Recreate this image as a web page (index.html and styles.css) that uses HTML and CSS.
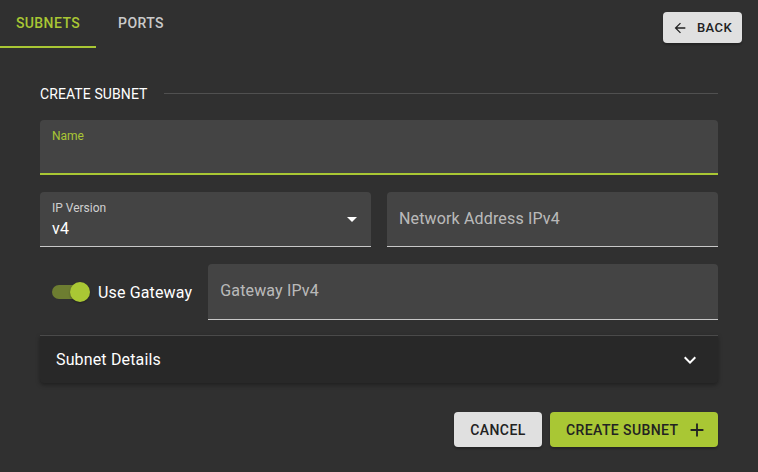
FILE: index.html
```html
<!DOCTYPE html>
<html>
<head>
<meta charset="utf-8">
<link rel="stylesheet" href="styles.css">
</head>
<body>
<div class="header">
  <div class="tabs">
    <div class="tab active">SUBNETS</div>
    <div class="tab">PORTS</div>
  </div>
  <button class="btn btn-back">
    <svg width="16" height="16" viewBox="0 0 24 24"><path d="M20 11H7.83l5.59-5.59L12 4l-8 8 8 8 1.41-1.41L7.83 13H20v-2z" fill="#222"/></svg>
    <span>BACK</span>
  </button>
</div>
<div class="content">
  <div class="section-title"><span>CREATE SUBNET</span><div class="rule"></div></div>
  <div class="field focused">
    <div class="label">Name</div>
  </div>
  <div class="row">
    <div class="field select">
      <div class="label grey">IP Version</div>
      <div class="value">v4</div>
      <svg class="caret" width="24" height="24" viewBox="0 0 24 24"><path d="M7 10l5 5 5-5z" fill="#fff"/></svg>
    </div>
    <div class="field">
      <div class="placeholder">Network Address IPv4</div>
    </div>
  </div>
  <div class="row gw">
    <div class="switch-wrap">
      <div class="switch"><div class="track"></div><div class="thumb"></div></div>
      <span class="switch-label">Use Gateway</span>
    </div>
    <div class="field grow">
      <div class="placeholder">Gateway IPv4</div>
    </div>
  </div>
  <div class="panel">
    <span>Subnet Details</span>
    <svg width="24" height="24" viewBox="0 0 24 24"><path d="M16.59 8.59L12 13.17 7.41 8.59 6 10l6 6 6-6z" fill="#fff"/></svg>
  </div>
  <div class="actions">
    <button class="btn btn-cancel">CANCEL</button>
    <button class="btn btn-create"><span>CREATE SUBNET</span>
      <svg width="22" height="22" viewBox="0 0 24 24"><path d="M19 13h-6v6h-2v-6H5v-2h6V5h2v6h6v2z" fill="#222"/></svg>
    </button>
  </div>
</div>
</body>
</html>
```
FILE: styles.css
```css
html, body {
  margin: 0;
  padding: 0;
  background: #303030;
  font-family: Roboto, "Liberation Sans", sans-serif;
  color: #fff;
  width: 758px;
  height: 472px;
  overflow: hidden;
}
.header {
  display: flex;
  justify-content: space-between;
  align-items: flex-start;
  height: 48px;
  padding-right: 16px;
}
.tabs {
  display: flex;
  height: 48px;
}
.tab {
  min-width: 90px;
  padding: 0 16px;
  box-sizing: border-box;
  display: flex;
  align-items: center;
  justify-content: center;
  font-size: 14px;
  font-weight: 500;
  letter-spacing: 0.4px;
  color: rgba(255,255,255,0.75);
  padding-bottom: 3px;
}
.tab.active {
  color: #a9c734;
  border-bottom: 2px solid #a9c734;
  padding-bottom: 1px;
  width: 96px;
}
.tab + .tab {
  padding-left: 20px;
  padding-right: 20px;
}
.btn {
  border: none;
  border-radius: 4px;
  font-family: Roboto, "Liberation Sans", sans-serif;
  font-weight: 500;
  font-size: 14px;
  letter-spacing: 0.4px;
  color: #222;
  display: flex;
  align-items: center;
  justify-content: center;
  cursor: pointer;
  box-shadow: 0 2px 2px rgba(0,0,0,0.25);
}
.btn-back {
  margin-top: 12px;
  height: 31px;
  width: 79px;
  background: #e0e0e0;
  font-size: 13px;
  gap: 9px;
  padding: 0 9px 0 8px;
}
.content {
  padding: 0 40px;
}
.section-title {
  display: flex;
  align-items: center;
  gap: 16px;
  height: 20px;
  margin-top: 36px;
  font-size: 14px;
  letter-spacing: 0.1px;
}
.rule {
  flex: 1;
  height: 1px;
  background: #505050;
  margin-top: -2px;
}
.field {
  position: relative;
  height: 55px;
  background: #444444;
  border-radius: 4px 4px 0 0;
  border-bottom: 1px solid #c8c8c8;
  box-sizing: border-box;
  padding: 0 12px;
}
.section-title + .field {
  margin-top: 16px;
}
.field.focused {
  border-bottom: 2px solid #a9c734;
}
.label {
  font-size: 12px;
  color: #a9c734;
  padding-top: 9px;
  line-height: 14px;
}
.label.grey {
  color: rgba(255,255,255,0.75);
}
.value {
  font-size: 16px;
  line-height: 20px;
  margin-top: 4px;
  letter-spacing: 0.15px;
}
.caret {
  position: absolute;
  right: 7px;
  top: 15px;
}
.placeholder {
  font-size: 16px;
  line-height: 20px;
  color: rgba(255,255,255,0.65);
  padding-top: 17px;
  letter-spacing: 0.15px;
}
.row {
  display: flex;
  gap: 16px;
  margin-top: 17px;
}
.row .field {
  flex: 1;
}
.row.gw .field {
  height: 56px;
}
.switch-wrap {
  display: flex;
  align-items: center;
  padding-left: 12px;
  gap: 8px;
}
.switch {
  position: relative;
  width: 38px;
  height: 20px;
}
.track {
  position: absolute;
  left: 0;
  top: 3px;
  width: 34px;
  height: 14px;
  border-radius: 7px;
  background: #6d7d31;
}
.thumb {
  position: absolute;
  right: 0;
  top: 0;
  width: 20px;
  height: 20px;
  border-radius: 50%;
  background: #a9c734;
  box-shadow: 0 1px 2px rgba(0,0,0,0.3);
}
.switch-label {
  font-size: 16px;
  letter-spacing: 0.15px;
}
.panel {
  margin-top: 15px;
  height: 48px;
  background: #282828;
  border-top: 1px solid #4a4a4a;
  box-sizing: border-box;
  display: flex;
  align-items: center;
  justify-content: space-between;
  padding: 0 16px;
  font-size: 16px;
  letter-spacing: 0.15px;
  box-shadow: 0 2px 4px rgba(0,0,0,0.35);
  border-radius: 0 0 4px 4px;
}
.actions {
  display: flex;
  justify-content: flex-end;
  gap: 8px;
  margin-top: 29px;
}
.btn-cancel {
  background: #e0e0e0;
  height: 35px;
  width: 88px;
}
.btn-create {
  background: #a9c734;
  height: 35px;
  width: 168px;
  gap: 8px;
  justify-content: flex-start;
  padding-left: 16px;
}
```
